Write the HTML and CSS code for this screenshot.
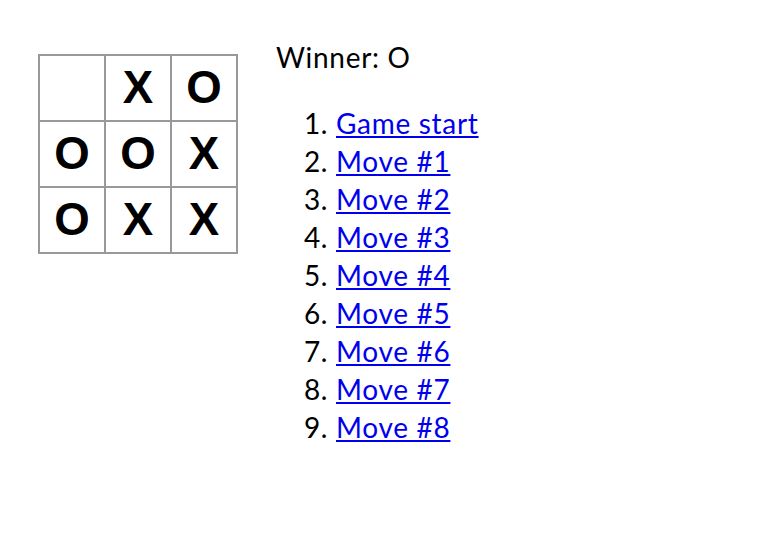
FILE: index.html
```html
<!DOCTYPE html>
<html>
<head>
<meta charset="utf-8">
<link rel="stylesheet" href="styles.css">
</head>
<body>
<div class="game">
  <div class="board">
    <button class="square"></button>
    <button class="square">X</button>
    <button class="square">O</button>
    <button class="square">O</button>
    <button class="square">O</button>
    <button class="square">X</button>
    <button class="square">O</button>
    <button class="square">X</button>
    <button class="square">X</button>
  </div>
  <div class="game-info">
    <div class="status">Winner: O</div>
    <ol class="moves">
      <li><a href="#">Game start</a></li>
      <li><a href="#">Move #1</a></li>
      <li><a href="#">Move #2</a></li>
      <li><a href="#">Move #3</a></li>
      <li><a href="#">Move #4</a></li>
      <li><a href="#">Move #5</a></li>
      <li><a href="#">Move #6</a></li>
      <li><a href="#">Move #7</a></li>
      <li><a href="#">Move #8</a></li>
    </ol>
  </div>
</div>
</body>
</html>
```
FILE: styles.css
```css
html, body {
  margin: 0;
  padding: 0;
  background: #fff;
}
body {
  font-family: "Century Gothic", Futura, "Lato", sans-serif;
  font-size: 28px;
  letter-spacing: 0.7px;
  line-height: 38px;
  color: #000;
  padding: 38px 0 0 38px;
}
.game {
  display: flex;
  flex-direction: row;
  align-items: flex-start;
}
.board {
  margin-top: 16px;
  display: grid;
  grid-template-columns: repeat(3, 64px);
  grid-template-rows: repeat(3, 64px);
  gap: 2px;
  padding: 2px;
  background: #999;
}
.square {
  background: #fff;
  border: 0;
  padding: 0;
  margin: 0;
  font-family: "Liberation Sans", Arial, sans-serif;
  font-weight: bold;
  font-size: 45.6px;
  letter-spacing: 0;
  line-height: 54px;
  color: #000;
  text-align: center;
}
.game-info {
  margin-left: 38px;
}
.status {
  margin: 0;
}
.moves {
  margin: 28px 0 0 0;
  padding-left: 60px;
}
.moves a {
  color: #0000ee;
  text-decoration: underline;
}
```
